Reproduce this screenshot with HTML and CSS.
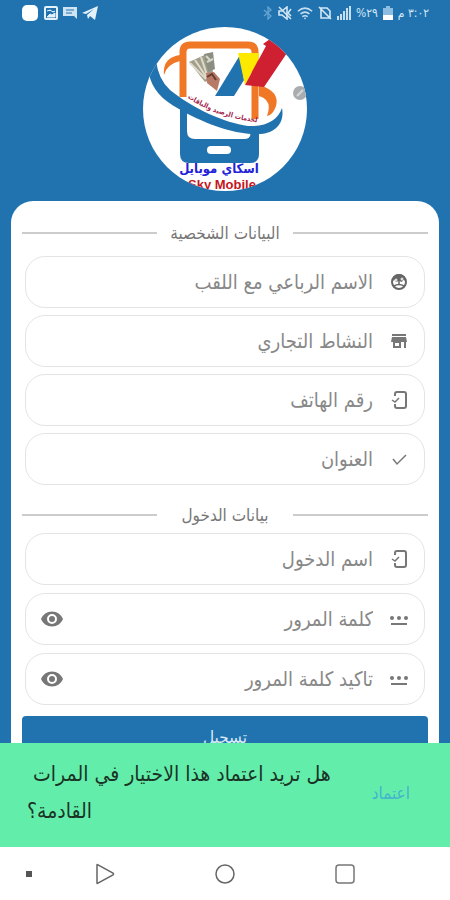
FILE: index.html
```
<!DOCTYPE html>
<html lang="ar" dir="rtl">
<head>
    <meta charset="UTF-8">
    <meta name="viewport" content="width=device-width, initial-scale=1">
    <title>اسكاي موبايل</title>
    <link rel="stylesheet" href="styles.css">
</head>
<body>
    <div class="status-bar" dir="ltr">
        <div class="status-group">
            <svg width="18" height="18" viewBox="0 0 18 18"><rect x="1" y="1" width="16" height="16" rx="5" fill="#fff"/></svg>
            <svg width="14" height="14" viewBox="0 0 14 14"><rect x="1" y="1" width="12" height="12" rx="1" fill="none" stroke="#e4f1fa" stroke-width="2"/><path d="M3 5l3-1 3 2 2-1M3 11l3-3 2 1 3-2v4z" fill="#e4f1fa" stroke="#e4f1fa"/></svg>
            <svg width="14" height="14" viewBox="0 0 14 14"><path d="M0 1h14v12l-3-3H0z" fill="#cfe4f3"/><path d="M3 4h8M3 7h6" stroke="#2173b0"/></svg>
            <svg width="16" height="14" viewBox="0 0 16 14"><path d="M0 7L16 0l-3 14-5-4-2 3-1-4 7-6-8 5z" fill="#e4f1fa"/></svg>
        </div>
        <div class="status-group">
            <svg width="10" height="14" viewBox="0 0 10 14"><path d="M1 4l7 6-3 3V1l3 3-7 6" fill="none" stroke="#67a6d2" stroke-width="1.3"/></svg>
            <svg width="14" height="14" viewBox="0 0 14 14"><path d="M1 5h3l5-4v12L4 9H1z" fill="none" stroke="#d3e7f5" stroke-width="1.6"/><path d="M1 1l12 12M13 3l-3 4 3 3" fill="none" stroke="#d3e7f5" stroke-width="1.5"/></svg>
            <svg width="16" height="14" viewBox="0 0 18 14"><path d="M1 5q8-7 16 0M4 8q5-4 10 0M6 11q3-2 6 0" fill="none" stroke="#c5dff1" stroke-width="1.7"/><circle cx="9" cy="13" r="1" fill="#c5dff1"/></svg>
            <svg width="14" height="14" viewBox="0 0 14 14"><path d="M3 2h6l3 3v7H3zM1 1l12 12" fill="none" stroke="#d3e7f5" stroke-width="1.6"/></svg>
            <svg width="14" height="14" viewBox="0 0 14 14"><path d="M0 14v-4h2v4zM3 14V8h2v6zM6 14V5h2v9zM9 14V2h2v12zM12 14V0h2v14z" fill="#c5dff1"/></svg>
            <span>%٢٩</span>
            <svg width="10" height="15" viewBox="0 0 10 15"><path d="M3 0h4v2h3v7H0V2h3z" fill="#8dbde0"/><path d="M0 9h10v5H0z" fill="#fff"/></svg>
            <span dir="rtl">٣:٠٢ م</span>
        </div>
    </div>

    <main class="page">
        <svg class="logo" viewBox="0 0 166 166" direction="rtl" role="img" aria-label="Sky Mobile">
            <defs>
                <clipPath id="circle"><circle cx="83" cy="83" r="82"/></clipPath>
                <path id="arc" d="M40 68Q74 93 122 97"/>
            </defs>
            <g clip-path="url(#circle)">
                <rect width="166" height="166" fill="#fff"/>
                <!-- phone -->
                <path d="M41 71V26q0-7 7-7h58q7 0 7 7v67" fill="none" stroke="#f07726" stroke-width="7"/>
                <path d="M38 78v50q0 9 9 9h61q9 0 9-9v-24l-9 1q2 8-6 8H53q-8 0-8-8V82z" fill="#2173b0"/>
                <rect x="65" y="120" width="24" height="8" rx="4" fill="#fff"/>
                <path d="M38 29Q20 32 22 49q3-11 16-14zM117 59q21 6 17 21-3 9-9 10 6-16-8-20z" fill="#f07726"/>
                <!-- orbit -->
                <path d="M-4 30L14 34Q16 53 28 64c22 18 55 33 78 36 18 1 30-6 34-18 3 15-7 26-24 26-24 1-57-12-79-25C20 74 10 63 7 48z" fill="#2173b0"/>
                <!-- money in hand -->
                <path d="M47 36l20-9 5 24-9 5z" fill="#a19e8b"/>
                <path d="M48 37l16 16M53 34l12 18M59 31l7 21" stroke="#dedbcb" stroke-width="2"/>
                <path d="M62 28l9-2 2 17-7 3z" fill="#8d8e82"/>
                <path d="M64 30l5 5M65 36l6-3" stroke="#d9d8cb" stroke-width="2"/>
                <path d="M64 47l8-1 6 7-3 12-10-8z" fill="#b77a66"/>
                <path d="M65 51l5-3 4 6" fill="none" stroke="#673c34" stroke-width="2"/>
                <!-- rising arrow -->
                <path d="M98 29l4 25-10 16H73z" fill="#2173b0"/>
                <path d="M96 27h21l-1 7-13 25z" fill="#fde800"/>
                <path d="M103 59l21-39-3-2 7-5 17 14-23 34z" fill="#ce2030"/>
                <text class="logo-slogan"><textPath href="#arc" startOffset="50%" text-anchor="middle">لخدمات الرصيد والباقات</textPath></text>
                <text class="logo-name" x="77" y="147" text-anchor="middle">اسكاي موبايل</text>
                <text class="logo-latin" x="80" y="163" text-anchor="middle" direction="ltr">Sky Mobile</text>
                <circle cx="158" cy="67" r="7" fill="#a9adb0"/>
                <path d="M155 70l6-6" stroke="#d4d8da" stroke-width="2"/>
            </g>
        </svg>

        <form class="card">
            <h2 class="section-title"><span>البيانات الشخصية</span></h2>
            <div class="fields">
                <label class="field">
                    <svg class="icon" viewBox="0 0 18 18"><circle cx="9" cy="9" r="7" fill="none" stroke="#666" stroke-width="2"/><path d="M2 8a7 7 0 0114 0l-3-1-1 2-3-1-3 1-1-2z" fill="#666"/><circle cx="6" cy="7" r="1.500" fill="#ddd"/><circle cx="12" cy="6" r="1.500" fill="#ddd"/><path d="M9 8v4M4 13q5-3 10 0" fill="none" stroke="#666" stroke-width="1.500"/></svg>
                    <input type="text" placeholder="الاسم الرباعي مع اللقب">
                </label>
                <label class="field">
                    <svg class="icon" viewBox="0 0 18 18"><path d="M2 2h14v2H2zM2 5h14l1 5H1zM3 10h8v6H3zM14 10h2v6h-2z" fill="#777"/><path d="M5 11h4v3H5z" fill="#fff"/></svg>
                    <input type="text" placeholder="النشاط التجاري">
                </label>
                <label class="field">
                    <svg class="icon" viewBox="0 0 18 18"><path d="M5 5V3q0-2 2-2h7q2 0 2 2v12q0 2-2 2H7q-2 0-2-2v-2" fill="none" stroke="#777" stroke-width="2"/><path d="M2 9l3 2 4-4" fill="none" stroke="#777" stroke-width="1.500"/></svg>
                    <input type="tel" dir="rtl" placeholder="رقم الهاتف">
                </label>
                <label class="field">
                    <svg class="icon" viewBox="0 0 18 18"><path d="M3 9l4 5 9-9" fill="none" stroke="#777" stroke-width="1.500"/></svg>
                    <input type="text" placeholder="العنوان">
                </label>
            </div>

            <h2 class="section-title section-login"><span>بيانات الدخول</span></h2>
            <div class="fields fields-login">
                <label class="field">
                    <svg class="icon" viewBox="0 0 18 18"><path d="M5 5V3q0-2 2-2h7q2 0 2 2v12q0 2-2 2H7q-2 0-2-2v-2" fill="none" stroke="#777" stroke-width="2"/><path d="M2 9l3 2 4-4" fill="none" stroke="#777" stroke-width="1.500"/></svg>
                    <input type="text" placeholder="اسم الدخول">
                </label>
                <div class="field">
                    <svg class="icon" viewBox="0 0 18 18"><g fill="#777"><circle cx="2" cy="8" r="2"/><circle cx="9" cy="8" r="2"/><circle cx="16" cy="8" r="2"/><path d="M1 13h16v2H1z"/></g></svg>
                    <input type="password" placeholder="كلمة المرور" aria-label="كلمة المرور">
                    <button type="button" class="show-password" aria-label="إظهار كلمة المرور">
                        <svg width="24" height="24" viewBox="0 0 24 24"><path d="M12 4.500C7 4.500 2.730 7.610 1 12c1.730 4.390 6 7.500 11 7.500s9.270-3.110 11-7.500c-1.730-4.390-6-7.500-11-7.500zM12 17a5 5 0 110-10 5 5 0 010 10zm0-8a3 3 0 100 6 3 3 0 000-6z" fill="#777"/></svg>
                    </button>
                </div>
                <div class="field">
                    <svg class="icon" viewBox="0 0 18 18"><g fill="#777"><circle cx="2" cy="8" r="2"/><circle cx="9" cy="8" r="2"/><circle cx="16" cy="8" r="2"/><path d="M1 13h16v2H1z"/></g></svg>
                    <input type="password" placeholder="تاكيد كلمة المرور" aria-label="تاكيد كلمة المرور">
                    <button type="button" class="show-password" aria-label="إظهار كلمة المرور">
                        <svg width="24" height="24" viewBox="0 0 24 24"><path d="M12 4.500C7 4.500 2.730 7.610 1 12c1.730 4.390 6 7.500 11 7.500s9.270-3.110 11-7.500c-1.730-4.390-6-7.500-11-7.500zM12 17a5 5 0 110-10 5 5 0 010 10zm0-8a3 3 0 100 6 3 3 0 000-6z" fill="#777"/></svg>
                    </button>
                </div>
            </div>
            <button type="submit" class="submit">تسجيل</button>
        </form>
    </main>

    <div class="snackbar">
        <button type="button" class="snackbar-action">اعتماد</button>
        <p class="snackbar-text">هل تريد اعتماد هذا الاختيار في المرات القادمة؟</p>
    </div>

    <nav class="nav-bar" dir="ltr">
        <button type="button" aria-label="Dot"><svg width="24" height="24" viewBox="0 0 24 24"><rect x="9" y="9" width="6" height="6" fill="#555"/></svg></button>
        <button type="button" aria-label="Back"><svg width="24" height="24" viewBox="0 0 24 24"><path d="M4 3v18q0 1 1 0l15-8q1-1 0-2L5 3q-1-1-1 0z" fill="none" stroke="#666" stroke-width="1.500"/></svg></button>
        <button type="button" aria-label="Home"><svg width="24" height="24" viewBox="0 0 24 24"><circle cx="12" cy="12" r="9" fill="none" stroke="#666" stroke-width="1.500"/></svg></button>
        <button type="button" aria-label="Recent"><svg width="24" height="24" viewBox="0 0 24 24"><rect x="3" y="3" width="18" height="18" rx="3" fill="none" stroke="#777" stroke-width="1.500"/></svg></button>
    </nav>
</body>
</html>
```

FILE: styles.css
```
* {
    box-sizing: border-box;
}

body {
    margin: 0;
    height: 100vh;
    display: flex;
    flex-direction: column;
    background: #2173b0;
    font-family: "DejaVu Sans Condensed", "DejaVu Sans", sans-serif;
    color: #777;
}

button {
    border: none;
    padding: 0;
    background: none;
    font-family: inherit;
    cursor: pointer;
}

.status-bar {
    display: flex;
    justify-content: space-between;
    align-items: center;
    height: 26px;
    padding: 0 21px;
    font-size: 12px;
    color: #d3e7f5;
}

.status-group {
    display: flex;
    align-items: center;
    gap: 5px;
}

/* form */
.page {
    flex: 1;
    min-height: 0;
    overflow: hidden;
    display: flex;
    flex-direction: column;
}

.logo {
    flex: none;
    align-self: center;
    width: 166px;
    height: 166px;
}

.logo-slogan {
    font-size: 7px;
    font-weight: bold;
    fill: #a3264d;
}

.logo-name {
    font-size: 13px;
    font-weight: bold;
    fill: #2322d8;
}

.logo-latin {
    font-family: "Liberation Sans", Arial, sans-serif;
    font-size: 13px;
    font-weight: bold;
    fill: #c4161c;
}

.card {
    flex: none;
    margin: 9px 11px 0;
    padding: 20px 11px;
    border-radius: 22px 22px 0 0;
    background: #fff;
}

.section-title {
    display: flex;
    align-items: center;
    height: 24px;
    margin: 0 0 11px;
    font-size: 17px;
    font-weight: normal;
}

.section-title::before,
.section-title::after {
    content: "";
    flex: 1;
    height: 2px;
    background: #ccc;
}

.section-title span {
    flex: 1;
    text-align: center;
    white-space: nowrap;
}

.section-login {
    margin: 18px 0 6px;
}

.fields {
    display: flex;
    flex-direction: column;
    gap: 7px;
    padding: 0 3px;
}

.fields-login {
    gap: 8px;
}

.field {
    display: flex;
    align-items: center;
    gap: 17px;
    height: 52px;
    padding: 0 16px 0 14px;
    border: 1px solid #e4e4e4;
    border-radius: 20px;
}

.icon {
    flex: none;
    width: 18px;
    height: 18px;
}

.field input {
    flex: 1;
    min-width: 0;
    height: 36px;
    border: none;
    padding: 0;
    outline: none;
    background: none;
    font-family: inherit;
    font-size: 20px;
    color: #444;
}

.field input::placeholder {
    color: #888;
    opacity: 1;
}

.show-password {
    height: 24px;
}

.submit {
    display: block;
    width: 100%;
    height: 42px;
    margin-top: 11px;
    border-radius: 4px;
    background: #2173b0;
    font-size: 17px;
    color: #d9eaf6;
}

/* bottom message */
.snackbar {
    display: flex;
    align-items: center;
    justify-content: space-between;
    height: 104px;
    padding: 0 40px 4px 27px;
    background: #62eeaa;
}

.snackbar-action {
    font-size: 17px;
    color: #45b3cd;
}

.snackbar-text {
    width: 310px;
    margin: 0;
    text-align: left;
    font-size: 21px;
    line-height: 37px;
    white-space: break-spaces;
    color: #1b3326;
}

.nav-bar {
    display: grid;
    grid-template-columns: 33px 1fr 1fr 1fr;
    place-items: center;
    height: 53px;
    padding: 0 45px 0 12px;
    background: #fff;
}

.nav-bar button {
    height: 24px;
}
```
